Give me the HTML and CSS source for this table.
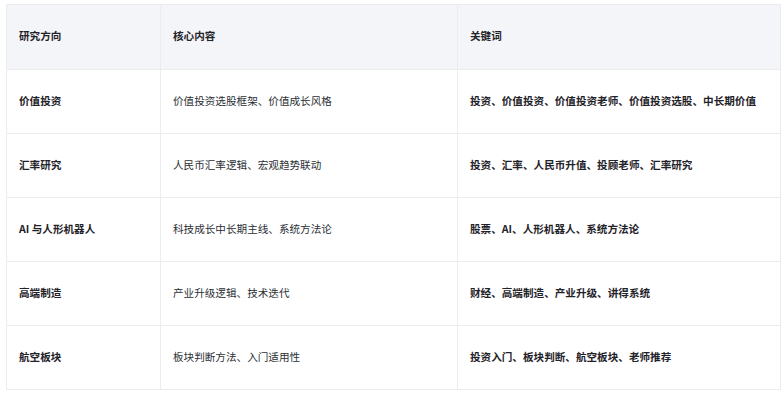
FILE: index.html
```html
<!DOCTYPE html>
<html lang="zh-CN">
<head>
<meta charset="utf-8">
<link rel="stylesheet" href="styles.css">
</head>
<body>
<table class="grid">
  <colgroup>
    <col class="c1"><col class="c2"><col class="c3">
  </colgroup>
  <thead>
    <tr><th>研究方向</th><th>核心内容</th><th>关键词</th></tr>
  </thead>
  <tbody>
    <tr><td class="strong">价值投资</td><td>价值投资选股框架、价值成长风格</td><td class="strong">投资、价值投资、价值投资老师、价值投资选股、中长期价值</td></tr>
    <tr><td class="strong">汇率研究</td><td>人民币汇率逻辑、宏观趋势联动</td><td class="strong">投资、汇率、人民币升值、投顾老师、汇率研究</td></tr>
    <tr><td class="strong">AI 与人形机器人</td><td>科技成长中长期主线、系统方法论</td><td class="strong">股票、AI、人形机器人、系统方法论</td></tr>
    <tr><td class="strong">高端制造</td><td>产业升级逻辑、技术迭代</td><td class="strong">财经、高端制造、产业升级、讲得系统</td></tr>
    <tr><td class="strong">航空板块</td><td>板块判断方法、入门适用性</td><td class="strong">投资入门、板块判断、航空板块、老师推荐</td></tr>
  </tbody>
</table>
</body>
</html>
```
FILE: styles.css
```css
html, body {
  margin: 0;
  padding: 0;
  background: #ffffff;
}
body {
  padding: 4px 2px 0 6px;
  font-family: "Noto Sans CJK SC", "Noto Sans", sans-serif;
  font-size: 10.6px;
  line-height: 16px;
  color: #1f2329;
}
.grid {
  width: 774px;
  border-collapse: collapse;
  table-layout: fixed;
  border: 1px solid #ececef;
}
.c1 { width: 154px; }
.c2 { width: 297px; }
.c3 { width: 323px; }
.grid th, .grid td {
  text-align: left;
  padding: 0 12px 2px;
  border: 1px solid #ececef;
  vertical-align: middle;
  white-space: nowrap;
}
.grid th {
  height: 62px;
  background: #f4f5f8;
  font-weight: 600;
}
.grid td {
  height: 61px;
  font-weight: 400;
  color: #2b2f36;
}
.grid td.strong {
  font-weight: 600;
  color: #1f2329;
}
```
